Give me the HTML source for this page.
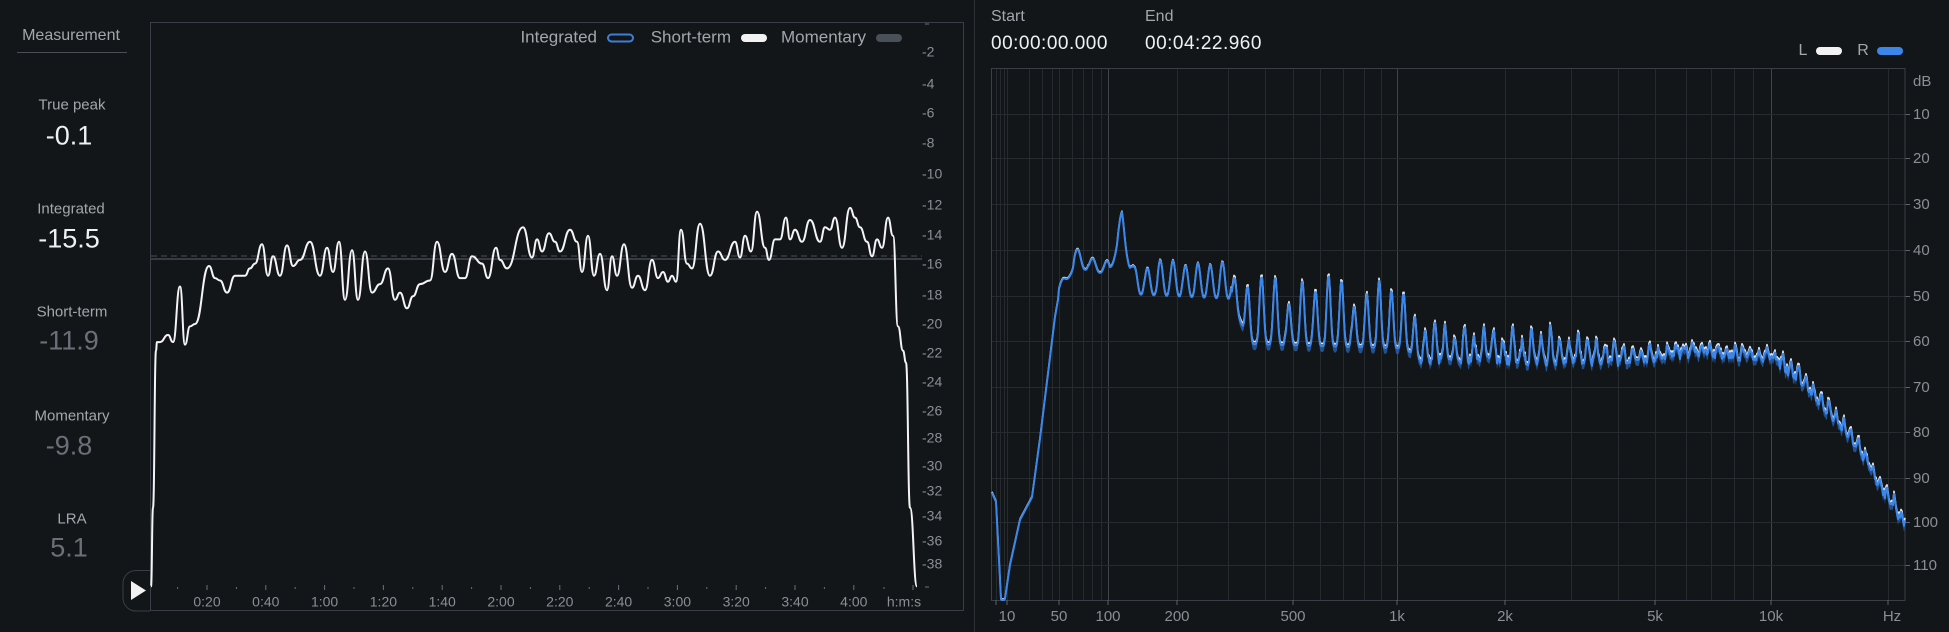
<!DOCTYPE html>
<html><head><meta charset="utf-8">
<style>
html,body{margin:0;padding:0;background:#131619;width:1949px;height:632px;overflow:hidden;font-family:"Liberation Sans",sans-serif;}
.t{position:absolute;white-space:nowrap;}
.lab{color:#a3a7ab;font-size:15px;transform:translate(-50%,-50%);}
.val{font-size:27px;transform:translate(-50%,-50%);}
</style></head><body>
<div class="t lab" style="left:71px;top:36px;font-size:16px;">Measurement</div>
<div style="position:absolute;left:17px;top:52px;width:110px;height:1px;background:#4a4f55"></div>
<div class="t lab" style="left:72px;top:105px">True peak</div>
<div class="t val" style="left:69px;top:136px;color:#eef0f2">-0.1</div>
<div class="t lab" style="left:71px;top:209px">Integrated</div>
<div class="t val" style="left:69px;top:239px;color:#eef0f2">-15.5</div>
<div class="t lab" style="left:72px;top:312px">Short-term</div>
<div class="t val" style="left:69px;top:341px;color:#6a7077">-11.9</div>
<div class="t lab" style="left:72px;top:416px">Momentary</div>
<div class="t val" style="left:69px;top:446px;color:#6a7077">-9.8</div>
<div class="t lab" style="left:72px;top:519px">LRA</div>
<div class="t val" style="left:69px;top:548px;color:#6a7077">5.1</div>

<svg id="s" width="1949" height="632" style="position:absolute;left:0;top:0" xmlns="http://www.w3.org/2000/svg" font-family="Liberation Sans, sans-serif">
</svg>
<div class="t" style="left:991px;top:8px;color:#a3a7ab;font-size:16px">Start</div>
<div class="t" style="left:991px;top:33px;color:#eef0f2;font-size:19px;letter-spacing:0.5px">00:00:00.000</div>
<div class="t" style="left:1145px;top:8px;color:#a3a7ab;font-size:16px">End</div>
<div class="t" style="left:1145px;top:33px;color:#eef0f2;font-size:19px;letter-spacing:0.5px">00:04:22.960</div>

<script>
var S=document.getElementById('s'),h='';
function L(x1,y1,x2,y2,c,w,extra){h+='<line x1="'+x1+'" y1="'+y1+'" x2="'+x2+'" y2="'+y2+'" stroke="'+c+'" stroke-width="'+(w||1)+'" '+(extra||'')+'/>';}
function T(x,y,s,c,fs,anc){h+='<text x="'+x+'" y="'+y+'" fill="'+c+'" font-size="'+fs+'" text-anchor="'+(anc||'middle')+'" dominant-baseline="middle">'+s+'</text>';}
L(974.5,0,974.5,632,'#2e3237',1);
h+='<rect x="150.5" y="22.5" width="813" height="588" fill="none" stroke="#3a3f45"/>';
h+='<path d="M150.5 570.5 H136 a13 13 0 0 0 -13 13 V598 a13 13 0 0 0 13 13 H150.5" fill="none" stroke="#3a3f45"/>';
h+='<path d="M131 581 L146 590.5 L131 600 Z" fill="#f2f2f2"/>';
var yl=[[-2,53],[-4,85],[-6,114],[-8,144],[-10,175],[-12,206],[-14,236],[-16,265],[-18,296],[-20,325],[-22,354],[-24,383],[-26,412],[-28,439],[-30,467],[-32,492],[-34,517],[-36,542],[-38,565]];
yl.forEach(function(a){T(922,a[1],''+a[0],'#8a8f95',14,'start');});
L(925,24,929,24,'#6a7077');L(925,587,929,587,'#6a7077');
var tl=['0:20','0:40','1:00','1:20','1:40','2:00','2:20','2:40','3:00','3:20','3:40','4:00'];
for(var i=0;i<tl.length;i++){var x=207+i*58.8;T(x,603,tl[i],'#8a8f95',14);L(x,585,x,590,'#6a7077');L(x-29.4,587,x-29.4,589,'#6a7077');}
L(884,587,884,589,'#6a7077');L(913,585,913,590,'#6a7077');
T(904,603,'h:m:s','#8a8f95',14);
T(597,38,'Integrated','#a3a7ab',17,'end');
h+='<rect x="608" y="34.5" width="25" height="7" rx="3.5" fill="none" stroke="#3c7fd8" stroke-width="2"/>';
T(731,38,'Short-term','#a3a7ab',17,'end');
h+='<rect x="741" y="34" width="26" height="8" rx="4" fill="#f2f2f2"/>';
T(866,38,'Momentary','#a3a7ab',17,'end');
h+='<rect x="876" y="34" width="26" height="8" rx="4" fill="#4a5058"/>';
L(151,259,922,259,'#5d636a',1);
L(151,256,922,256,'#4a5058',1,'stroke-dasharray="6 4"');
var p=[[151,485],[153,420],[156,290],[157,283],[160,283],[168,277],[173,283],[180,237],[185,285],[190,270],[195,268],[209,220],[215,230],[220,232],[227,242],[235,228],[245,228],[250,222],[255,218],[262,202],[268,228],[273,212],[280,228],[287,203],[293,220],[300,215],[310,200],[320,228],[327,205],[333,225],[339,200],[345,248],[352,207],[358,248],[365,208],[372,242],[380,235],[388,222],[395,248],[400,242],[407,255],[413,245],[420,235],[430,232],[437,200],[445,225],[452,210],[460,230],[465,230],[472,212],[482,218],[488,230],[496,205],[500,215],[507,222],[523,188],[532,213],[537,198],[542,208],[549,193],[555,200],[560,208],[570,190],[577,200],[582,225],[588,195],[594,228],[600,210],[607,240],[612,212],[617,228],[624,202],[632,238],[638,228],[645,240],[652,215],[658,230],[663,225],[668,233],[672,228],[676,233],[681,190],[687,218],[692,222],[700,185],[710,228],[718,208],[725,215],[735,200],[740,213],[745,195],[751,208],[757,175],[765,205],[769,215],[775,198],[780,198],[786,180],[790,198],[795,190],[802,200],[810,182],[820,200],[825,188],[830,190],[835,180],[842,205],[850,172],[855,180],[860,188],[867,200],[872,212],[877,198],[882,205],[888,180],[893,195],[898,270],[903,290],[906,300],[910,420],[917,485]];
var d='';
for(var i=0;i<p.length;i++){var x=p[i][0],y=p[i][1]*1.209;
 if(i==0)d+='M'+x+' '+y.toFixed(1);
 else{var q=p[i-1],mx=(q[0]+x)/2;d+=' C'+mx+' '+(q[1]*1.209).toFixed(1)+' '+mx+' '+y.toFixed(1)+' '+x+' '+y.toFixed(1);}}
h+='<path d="'+d+'" fill="none" stroke="#f4f4f4" stroke-width="2" stroke-linejoin="round"/>';

var X0=991.5,X1=1905,Y0=68.5,Y1=600.5;
var fa=[[6,991],[10,1007],[50,1059],[100,1108],[200,1177],[500,1293],[1000,1397],[2000,1505],[5000,1655],[10000,1771],[20000,1888]];
function fx(f){for(var i=0;i<fa.length-1;i++){if(f<=fa[i+1][0]){var a=fa[i],b=fa[i+1];var t=(Math.log(f)-Math.log(a[0]))/(Math.log(b[0])-Math.log(a[0]));return a[1]+t*(b[1]-a[1]);}}return 1888;}
var mins=[];
for(var dec=1;dec<=10000;dec*=10){for(var m=1;m<=9;m++){var f=dec*m;if(f>=7&&f<=20000)mins.push(f);}}
mins.forEach(function(f){var x=Math.round(fx(f))+0.5;var major=(f==100||f==1000||f==10000);L(x,Y0,x,Y1,major?'#3f444a':'#262a2f',1);});
var dbs=[[10,114],[20,158],[30,204],[40,250],[50,296],[60,341],[70,387],[80,432],[90,478],[100,522],[110,565]];
dbs.forEach(function(a){L(X0,a[1]+0.5,X1,a[1]+0.5,'#272b30');L(1905,a[1]+0.5,1910,a[1]+0.5,'#5d636a');T(1913,a[1]+1,a[0],'#8a8f95',15,'start');});
T(1913,82,'dB','#8a8f95',15,'start');
h+='<rect x="'+X0+'" y="'+Y0+'" width="'+(X1-X0)+'" height="'+(Y1-Y0)+'" fill="none" stroke="#3a3f45"/>';
[[10,'10'],[50,'50'],[100,'100'],[200,'200'],[500,'500'],[1000,'1k'],[2000,'2k'],[5000,'5k'],[10000,'10k']].forEach(function(a){var x=fx(a[0]);T(x,617,a[1],'#8a8f95',15);L(x,600,x,605,'#5d636a');});
L(996,600,996,605,'#5d636a');L(1888,600,1888,605,'#5d636a');
T(1892,617,'Hz','#8a8f95',15);
T(1803,51,'L','#a3a7ab',16);
h+='<rect x="1816" y="47" width="26" height="8" rx="4" fill="#f2f2f2"/>';
T(1863,51,'R','#a3a7ab',16);
h+='<rect x="1877" y="47" width="26" height="8" rx="4" fill="#3a86ea"/>';
function pw(x,arr){if(x<=arr[0][0])return arr[0][1];for(var i=0;i<arr.length-1;i++){if(x<=arr[i+1][0]){var t=(x-arr[i][0])/(arr[i+1][0]-arr[i][0]);return arr[i][1]+t*(arr[i+1][1]-arr[i][1]);}}return arr[arr.length-1][1];}
var trough=[[1059,50],[1075,44],[1094,45],[1122,46],[1135,50],[1231,51],[1250,61],[1405,62],[1420,64.5],[1616,65],[1700,63],[1771,64.5],[1800,69],[1850,82],[1904,101]];
var amp=[[1059,4],[1122,5],[1140,9],[1231,9],[1250,18],[1405,15],[1420,9],[1616,8],[1630,3],[1771,3],[1904,4]];
var per=[[1059,16],[1140,13],[1231,12],[1250,14],[1405,12],[1420,10],[1616,9],[1905,7]];
var seed=7;function rnd(){seed=(seed*16807)%2147483647;return seed/2147483647;}
var ph=0,cyc=-1,fac=1,ptsR=[],ptsL=[],ptsB=[];
function yd(db){return Math.min(600,114+(db-10)*4.51);}
for(var x=992;x<=1905;x+=1){
 var db;
 if(x<1002)db=pw(x,[[992,94],[996,96],[1002,122]]);
 else if(x<1059)db=pw(x,[[1002,122],[1010,110],[1020,100],[1032,95],[1040,82],[1050,64],[1055,55],[1059,50]]);
 else{
  ph+=1/pw(x,per);var c=Math.floor(ph);if(c!=cyc){cyc=c;fac=0.5+0.5*rnd();}
  var s=0.5+0.5*Math.sin(ph*Math.PI*2);var pk=Math.pow(s,x>1231?2.2:1.3);
  db=pw(x,trough)-pw(x,amp)*fac*pk+(x>1420?(rnd()-0.5)*2:0);
  if(x>1110&&x<1134)db-=(12-Math.abs(x-1122))*0.85;
 }
 var y=yd(db);ptsR.push([x,y]);ptsL.push([x,Math.max(0,y-(x>1231?2.5:1))]);ptsB.push([x,Math.min(600,y+(x>1231?6:1))]);
}
function poly(pts){return pts.map(function(p,i){return (i?'L':'M')+p[0]+' '+p[1].toFixed(1);}).join('');}
var band=poly(ptsR)+ptsB.slice().reverse().map(function(p){return 'L'+p[0]+' '+p[1].toFixed(1);}).join('')+'Z';
h+='<path d="'+band+'" fill="#2a5fa8" opacity="0.8"/>';
h+='<path d="'+poly(ptsL)+'" fill="none" stroke="#e6e6e6" stroke-width="1.6" stroke-linejoin="round"/>';
h+='<path d="'+poly(ptsR)+'" fill="none" stroke="#3a86ea" stroke-width="2" stroke-linejoin="round"/>';
S.innerHTML=h;
</script>
</body></html>
